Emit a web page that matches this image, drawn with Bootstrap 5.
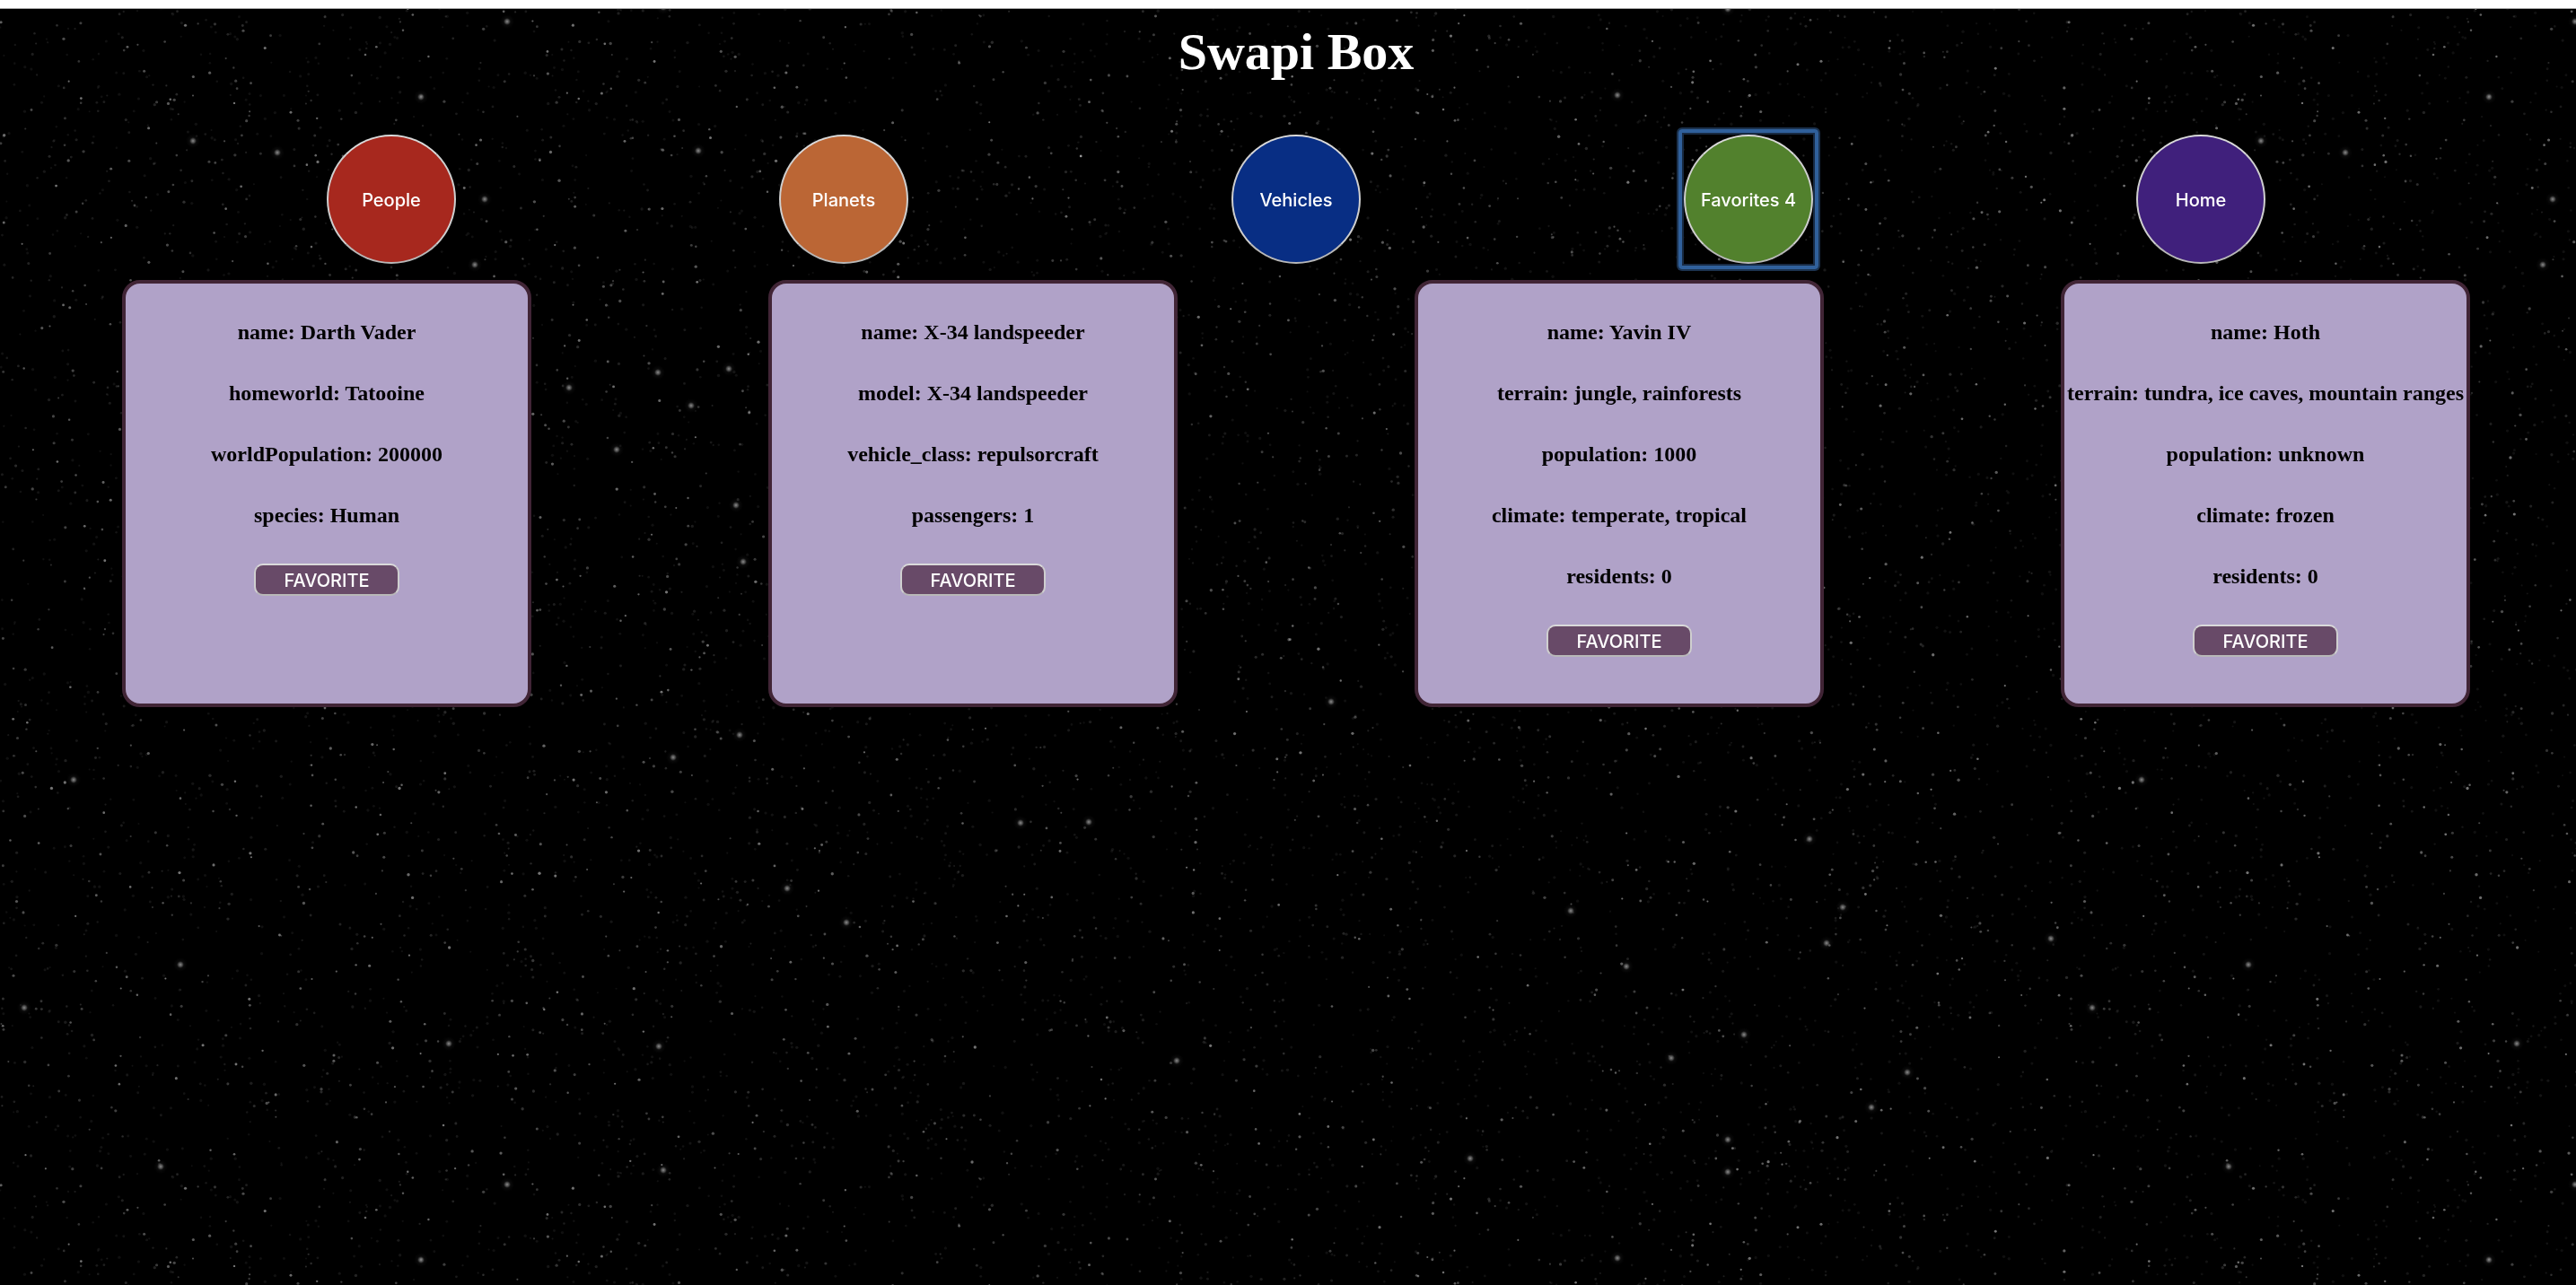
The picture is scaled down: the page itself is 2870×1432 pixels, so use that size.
<!DOCTYPE html>
<html lang="en">
<head>
<meta charset="utf-8">
<meta name="viewport" content="width=device-width, initial-scale=1">
<title>Swapi Box</title>
<link href="https://cdn.jsdelivr.net/npm/bootstrap@5.3.0/dist/css/bootstrap.min.css" rel="stylesheet">
<style>
  body { background: #000; font-family: "Liberation Serif", "Times New Roman", serif; }
  .top-strip { height: 10px; border-bottom: 1px solid #a6a6a6; }
  .sky { z-index: -1; }
  .swapi-app { padding-left: 18px; }
  .swapi-title { padding-top: 16px; font-size: 58px; line-height: 64px; }
  .swapi-nav { margin-top: 60px; padding: 0 166px; }
  .swapi-nav button, .fav-btn {
    font-family: Inter, Roboto, sans-serif; font-size: 20px; font-weight: 500; line-height: 24px;
    color: #fff; border: 2px solid; border-color: #dadada #cfcfcf #b8b8b8 #cfcfcf; padding: 2px 0 0;
  }
  .swapi-nav button { width: 144px; height: 144px; border-radius: 50%; }
  .nav-people { background: #a7281e; }
  .nav-planets { background: #bb6635; }
  .nav-vehicles { background: #082e84; }
  .nav-favorites { background: #52812d; }
  .nav-home { background: #40207c; }
  /* focus ring round the selected category */
  .is-current::before {
    content: ""; position: absolute; inset: -8px; border: 4px solid #30609b; border-radius: 4px;
    box-shadow: 0 0 0 2px #1c3350, inset 0 0 0 2px #182a42;
  }
  .card-deck { margin-top: 18px; padding: 0 118px; }
  .swapi-card {
    width: 456px; height: 476px; padding-top: 40px; gap: 40px;
    background: #b0a2c8; border: 4px solid #412536; border-radius: 20px;
    color: #000; font-size: 24px; font-weight: 700; line-height: 28px;
  }
  .swapi-card p { white-space: nowrap; }
  .fav-btn { width: 162px; height: 36px; background: #684a68; border-radius: 10px; }
</style>
</head>
<body class="min-vh-100">
<canvas class="sky position-fixed top-0 start-0" id="sky" aria-hidden="true"></canvas>
<div class="top-strip bg-white"></div>
<main class="swapi-app">
  <h1 class="swapi-title text-white text-center fw-bold mb-0">Swapi Box</h1>
  <nav class="swapi-nav d-flex justify-content-around">
    <button type="button" class="nav-people">People</button>
    <button type="button" class="nav-planets">Planets</button>
    <button type="button" class="nav-vehicles">Vehicles</button>
    <button type="button" class="nav-favorites is-current position-relative">Favorites 4</button>
    <button type="button" class="nav-home">Home</button>
  </nav>
  <section class="card-deck d-flex justify-content-between">
    <article class="swapi-card d-flex flex-column align-items-center">
      <p class="mb-0">name: Darth Vader</p>
      <p class="mb-0">homeworld: Tatooine</p>
      <p class="mb-0">worldPopulation: 200000</p>
      <p class="mb-0">species: Human</p>
      <button type="button" class="fav-btn">FAVORITE</button>
    </article>
    <article class="swapi-card d-flex flex-column align-items-center">
      <p class="mb-0">name: X-34 landspeeder</p>
      <p class="mb-0">model: X-34 landspeeder</p>
      <p class="mb-0">vehicle_class: repulsorcraft</p>
      <p class="mb-0">passengers: 1</p>
      <button type="button" class="fav-btn">FAVORITE</button>
    </article>
    <article class="swapi-card d-flex flex-column align-items-center">
      <p class="mb-0">name: Yavin IV</p>
      <p class="mb-0">terrain: jungle, rainforests</p>
      <p class="mb-0">population: 1000</p>
      <p class="mb-0">climate: temperate, tropical</p>
      <p class="mb-0">residents: 0</p>
      <button type="button" class="fav-btn">FAVORITE</button>
    </article>
    <article class="swapi-card d-flex flex-column align-items-center">
      <p class="mb-0">name: Hoth</p>
      <p class="mb-0">terrain: tundra, ice caves, mountain ranges</p>
      <p class="mb-0">population: unknown</p>
      <p class="mb-0">climate: frozen</p>
      <p class="mb-0">residents: 0</p>
      <button type="button" class="fav-btn">FAVORITE</button>
    </article>
  </section>
</main>
<script src="https://cdn.jsdelivr.net/npm/bootstrap@5.3.0/dist/js/bootstrap.bundle.min.js"></script>
<script>
  // Star field: one tile of faint stars, repeated over the window.
  const TILE_W = 2304, TILE_H = 1296;
  let seed = 7;
  const rnd = () => {
    seed = (seed + 0x6D2B79F5) | 0;
    let t = Math.imul(seed ^ (seed >>> 15), 1 | seed);
    t = (t + Math.imul(t ^ (t >>> 7), 61 | t)) ^ t;
    return ((t ^ (t >>> 14)) >>> 0) / 4294967296;
  };
  const stars = [];
  for (let i = 0; i < 8500; i++) {
    const r = rnd();
    stars.push([rnd() * TILE_W, rnd() * TILE_H, 1 + rnd() * 0.7, 0.07 + 0.45 * r * r * r * r]);
  }
  const bright = [
    [201,1075],[179,1300],[565,1320],[877,990],[943,1028],[1213,916],[1137,917],[824,819],[82,869],
    [750,844],[469,1404],[734,1166],[500,1163],[27,1123],[739,1304],[1311,1182],[1812,1077],[2035,1051],
    [2053,1011],[2016,935],[2085,1234],[1925,1270],[1925,1306],[1862,1179],[1943,1153],[2125,1195],
    [2285,1046],[1750,1015],[1638,1291],[1802,1402],[1483,782],[529,295],[778,168],[540,222],[215,157],[309,170],
    [634,432],[770,452],[687,501],[733,415],[812,411],[820,563],[828,626]
  ];
  const sky = document.getElementById('sky');
  function drawSky() {
    sky.width = innerWidth;
    sky.height = innerHeight;
    const g = sky.getContext('2d');
    g.fillStyle = '#000';
    g.fillRect(0, 0, sky.width, sky.height);
    for (let ox = 0; ox < sky.width; ox += TILE_W) {
      for (let oy = 0; oy < sky.height; oy += TILE_H) {
        for (const [x, y, r, a] of stars) {
          g.fillStyle = `rgba(225,225,225,${a})`;
          g.beginPath();
          g.arc(ox + x, oy + y, r, 0, 7);
          g.fill();
        }
        for (const [x, y] of bright) {
          const cx = ox + x, cy = oy + (y % TILE_H);
          const glow = g.createRadialGradient(cx, cy, 0, cx, cy, 8);
          glow.addColorStop(0, 'rgba(190,190,190,.75)');
          glow.addColorStop(0.3, 'rgba(150,150,150,.45)');
          glow.addColorStop(0.5, 'rgba(90,90,90,.12)');
          glow.addColorStop(1, 'rgba(60,60,60,0)');
          g.fillStyle = glow;
          g.fillRect(cx - 8, cy - 8, 16, 16);
        }
      }
    }
  }
  drawSky();
  addEventListener('resize', drawSky);
</script>
</body>
</html>
